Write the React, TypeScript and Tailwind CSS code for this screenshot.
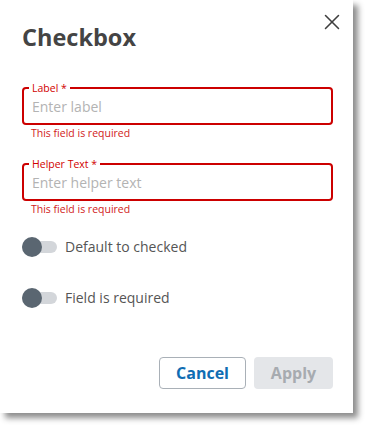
import { X } from 'lucide-react';

type FieldProps = {
  label: string;
  placeholder: string;
};

function RequiredField({ label, placeholder }: FieldProps) {
  return (
    <div>
      <div className="relative h-[38px] rounded-[4px] border-2 border-[#cc0000]">
        <span className="absolute -top-[8px] left-[5px] bg-white px-[3px] text-[10.5px] leading-[14px] text-[#d10000]">
          {label}
        </span>
        <input
          className="h-full w-full bg-transparent px-[8px] text-[14px] text-[#444] outline-none placeholder:text-[#b3b3b3]"
          placeholder={placeholder}
        />
      </div>
      <p className="mt-[1px] pl-[9px] text-[10.5px] leading-[14px] text-[#d11a1a]">
        This field is required
      </p>
    </div>
  );
}

function Toggle({ label }: { label: string }) {
  return (
    <div className="flex h-[20px] items-center">
      <div className="relative flex h-[20px] w-[35px] items-center">
        <div className="h-[12px] w-[35px] rounded-full bg-[#d3d6da]" />
        <div className="absolute left-0 top-0 h-[20px] w-[20px] rounded-full bg-[#5a6671]" />
      </div>
      <span className="ml-[8px] text-[14px] leading-[20px] text-[#555]">{label}</span>
    </div>
  );
}

export default function App() {
  return (
    <div
      className="h-[429px] w-[368px] bg-white"
      style={{ fontFamily: '"Open Sans", "Noto Sans", sans-serif' }}
    >
      <div className="relative flex h-[413px] w-[353px] flex-col bg-white pl-[22px] pr-[20px] shadow-[5px_5px_6px_rgba(0,0,0,0.45)]">
        <button className="absolute right-[8px] top-[9px] flex h-[26px] w-[26px] items-center justify-center text-[#3f3f3f]">
          <X className="h-[26px] w-[26px]" strokeWidth={1.4} />
        </button>

        <h1 className="pt-[21px] text-[23.5px] font-bold leading-[32px] text-[#444]">Checkbox</h1>

        <div className="mt-[34px]">
          <RequiredField label="Label *" placeholder="Enter label" />
        </div>
        <div className="mt-[23px]">
          <RequiredField label="Helper Text *" placeholder="Enter helper text" />
        </div>

        <div className="mt-[21px]">
          <Toggle label="Default to checked" />
        </div>
        <div className="mt-[31px]">
          <Toggle label="Field is required" />
        </div>

        <div className="mt-[49px] flex justify-end gap-[8px]">
          <button className="h-[32px] w-[87px] rounded-[4px] border border-[#a9b0b7] text-[16px] font-bold text-[#0f6db3]">
            Cancel
          </button>
          <button className="h-[32px] w-[79px] rounded-[4px] bg-[#e4e6e9] text-[16px] font-bold text-[#a7abb0]">
            Apply
          </button>
        </div>
      </div>
    </div>
  );
}
